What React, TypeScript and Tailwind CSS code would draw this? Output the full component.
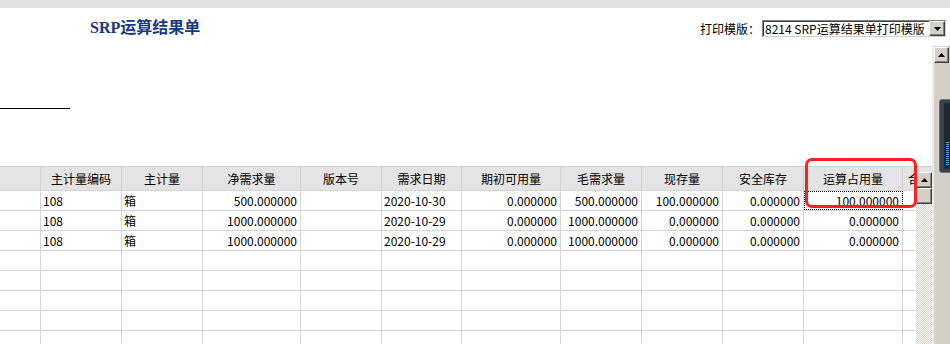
import React from 'react';

const COLS = ['41px', '81px', '81px', '98px', '81px', '80px', '99px', '81px', '81px', '81px', '99px', '13px'];

const HEADERS = ['', '主计量编码', '主计量', '净需求量', '版本号', '需求日期', '期初可用量', '毛需求量', '现存量', '安全库存', '运算占用量', '合'];

// left = 'l', right = 'r'
const ALIGN = ['l', 'l', 'l', 'r', 'l', 'l', 'r', 'r', 'r', 'r', 'r', 'l'];

const ROWS: string[][] = [
  ['', '108', '箱', '500.000000', '', '2020-10-30', '0.000000', '500.000000', '100.000000', '0.000000', '100.000000', ''],
  ['', '108', '箱', '1000.000000', '', '2020-10-29', '0.000000', '1000.000000', '0.000000', '0.000000', '0.000000', ''],
  ['', '108', '箱', '1000.000000', '', '2020-10-29', '0.000000', '1000.000000', '0.000000', '0.000000', '0.000000', ''],
  ['', '', '', '', '', '', '', '', '', '', '', ''],
  ['', '', '', '', '', '', '', '', '', '', '', ''],
  ['', '', '', '', '', '', '', '', '', '', '', ''],
  ['', '', '', '', '', '', '', '', '', '', '', ''],
  ['', '', '', '', '', '', '', '', '', '', '', ''],
];

const gridCols = 'grid grid-cols-[41px_81px_81px_98px_81px_80px_99px_81px_81px_81px_99px_13px]';

const UpArrow = () => (
  <svg width="7" height="4" viewBox="0 0 7 4">
    <path d="M3.5 0 L7 4 L0 4 Z" fill="#000" />
  </svg>
);

const DownArrow = () => (
  <svg width="7" height="4" viewBox="0 0 7 4">
    <path d="M0 0 L7 0 L3.5 4 Z" fill="#000" />
  </svg>
);

const Btn3D: React.FC<{ className?: string; children?: React.ReactNode }> = ({ className = '', children }) => (
  <div
    className={`flex items-center justify-center bg-[#d4d0c8] border border-t-white border-l-white border-r-[#404040] border-b-[#404040] shadow-[inset_-1px_-1px_0_#808080] ${className}`}
  >
    {children}
  </div>
);

export default function App() {
  return (
    <div className="relative w-[950px] h-[344px] overflow-hidden bg-white flex flex-col text-[12px] text-black font-['Noto_Sans_CJK_SC',sans-serif]">
      {/* top bar */}
      <div className="h-2 shrink-0 bg-[#e1e1e1]" />

      {/* title + print template */}
      <div className="h-[38px] shrink-0 flex items-start">
        <div className="pl-[90px] pt-[10px] text-[16px] leading-[20px] font-bold text-[#173a85] font-['Liberation_Serif','Noto_Sans_CJK_SC',serif]">
          SRP运算结果单
        </div>
        <div className="ml-auto flex items-center pt-[12px] pr-[4px]">
          <span className="leading-[16px]">打印模版：</span>
          <div className="ml-[2px] w-[184px] h-[17px] flex items-center bg-white border border-t-[#808080] border-l-[#808080] border-r-[#d4d0c8] border-b-[#d4d0c8] shadow-[inset_1px_1px_0_#404040]">
            <span className="flex-1 pl-[2px] leading-[15px] whitespace-nowrap overflow-hidden">8214 SRP运算结果单打印模版</span>
            <Btn3D className="w-[16px] h-[15px]">
              <DownArrow />
            </Btn3D>
          </div>
        </div>
      </div>

      {/* body */}
      <div className="flex flex-1 min-h-0">
        <div className="flex-1 flex flex-col min-w-0">
          <div className="h-[62px] shrink-0" />
          <div className="h-px w-[70px] bg-black shrink-0" />
          <div className="h-[57px] shrink-0" />

          {/* grid */}
          <div className="flex flex-1 min-h-0 border-t border-[#cfcfcf]">
            <div className="w-[916px] shrink-0 flex flex-col">
              <div className={`${gridCols} h-[24px] shrink-0 bg-[#e4e4e4] border-b border-[#d4d4d4]`}>
                {HEADERS.map((h, i) => (
                  <div
                    key={i}
                    className={`flex items-center overflow-hidden whitespace-nowrap ${i < 11 ? 'justify-center border-r border-[#cfcfcf]' : 'pl-[5px]'}`}
                  >
                    {h}
                  </div>
                ))}
              </div>
              {ROWS.map((row, r) => (
                <div key={r} className={`${gridCols} h-[20px] shrink-0 border-b border-[#d4d4d4]`}>
                  {row.map((c, i) => (
                    <div
                      key={i}
                      className={`flex items-center overflow-hidden whitespace-nowrap ${i < 11 ? 'border-r border-[#d4d4d4]' : ''} ${
                        ALIGN[i] === 'r' ? 'justify-end pr-[3px]' : 'pl-[2px]'
                      } ${r === 0 && i === 10 ? 'outline-1 outline-dotted outline-black -outline-offset-1' : ''}`}
                    >
                      {c}
                    </div>
                  ))}
                </div>
              ))}
            </div>

            {/* grid scrollbar */}
            <div className="w-[16px] shrink-0 flex flex-col">
              <div className="h-[5px] shrink-0 bg-[#e4e4e4]" />
              <Btn3D className="h-[16px] shrink-0">
                <UpArrow />
              </Btn3D>
              <Btn3D className="h-[16px] shrink-0" />
              <div className="flex-1 bg-[repeating-conic-gradient(#d4d0c8_0%_25%,#ffffff_0%_50%)] bg-[length:2px_2px]" />
            </div>
          </div>
        </div>

        {/* page scrollbar */}
        <div className="w-[18px] shrink-0 flex flex-col bg-[#d4d0c8] border-l-2 border-[#ecebe6] overflow-hidden">
          <Btn3D className="h-[16px] w-[15px] shrink-0 mt-px">
            <UpArrow />
          </Btn3D>
          <div className="h-[36px] shrink-0" />
          <div className="ml-[5px] w-[16px] h-[74px] shrink-0 rounded-[3px] bg-[#37424c] border border-[#66717b] flex justify-center">
            <div className="mt-[3px] mb-[3px] w-[6px] bg-[#1f2830] rounded-[2px] flex flex-col justify-end items-center pb-[4px] gap-[1px]">
              {Array.from({ length: 12 }).map((_, i) => (
                <div key={i} className="w-[3px] h-px bg-[#3fa8d8]" />
              ))}
            </div>
          </div>
        </div>
      </div>

      {/* red annotation */}
      <div className="absolute left-[805px] top-[158px] w-[112px] h-[50px] border-[3px] border-[#ff1f1f] rounded-[7px]" />
    </div>
  );
}
